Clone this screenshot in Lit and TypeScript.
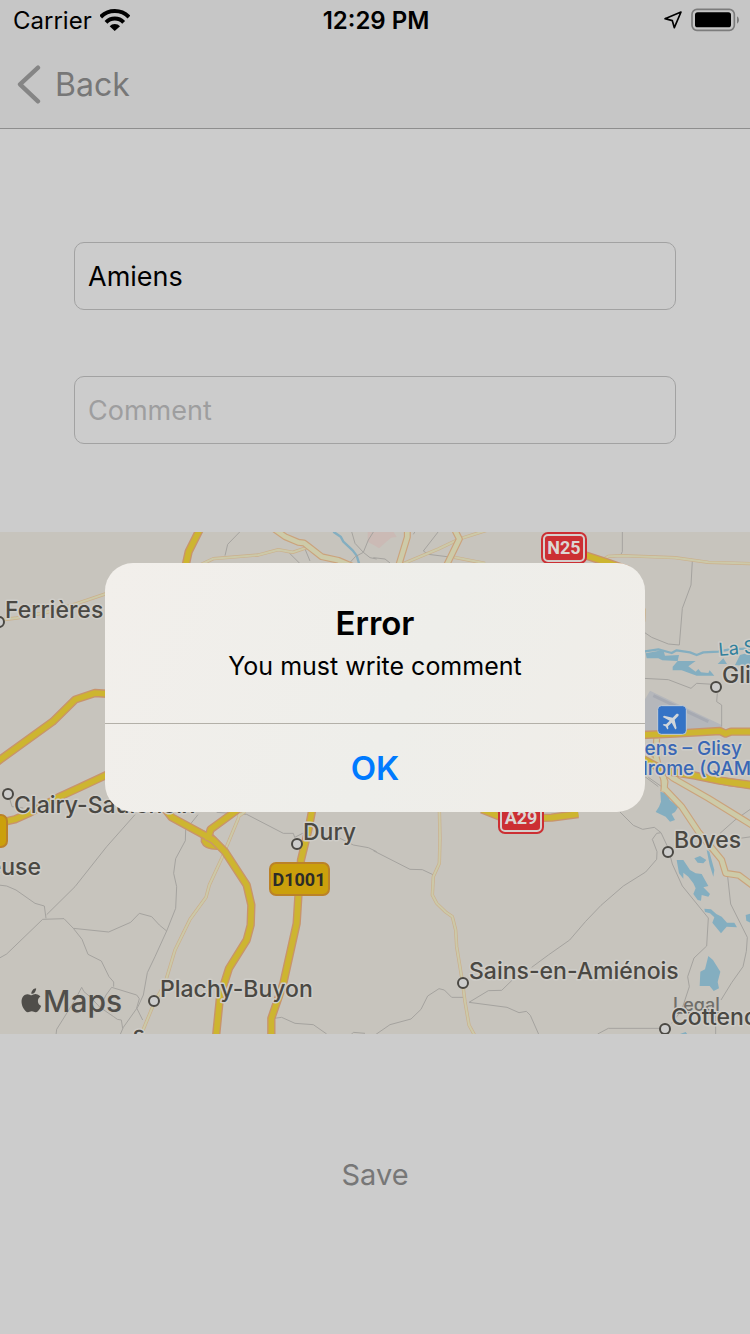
import { LitElement, html, svg, css } from "lit";
import { customElement, state } from "lit/decorators.js";

type Place = { name: string; x: number; y: number; cx: number; cy: number };

const places: Place[] = [
  { name: "Ferrières", x: 5, y: 86, cx: -1, cy: 90 },
  { name: "Clairy-Saulchoix", x: 14, y: 281, cx: 8, cy: 262 },
  { name: "Dury", x: 303, y: 308, cx: 297, cy: 312 },
  { name: "Plachy-Buyon", x: 160, y: 465, cx: 154, cy: 469 },
  { name: "Sains-en-Amiénois", x: 469, y: 447, cx: 463, cy: 451 },
  { name: "Boves", x: 674, y: 316, cx: 668, cy: 320 },
  { name: "Glisy", x: 722, y: 151, cx: 716, cy: 155 },
  { name: "Cottenchy", x: 671, y: 493, cx: 665, cy: 497 },
];

// The drawing is split into four sheets, each with its own origin.
const sheets = [
  {
    at: "translate(0 -21)",
    area: "",
    water: "",
    stream: "M1000 20L1022 35L1030 50L1058 76L1070 92L1078 118",
    track:
      "M720 20L683 58L675 92M868 84L900 116M915 72L930 108M1055 20L1065 55L1090 82L1105 45L1120 21M1090 82L1110 98L1130 102M1045 118L1066 95L1090 82",
    lane: "M600 120L640 101L775 90L835 74L878 82L920 68M0 285L50 279L140 262L230 236L330 202",
    road: "M820 10L855 35L895 52L912 54L925 64L965 95L1015 106L1060 125",
    trunk: "M602 8L566 80L555 130M-8 710L158 590L225 524L285 504L330 507",
  },
  {
    at: "translate(1125 -21)",
    area: "M-22 20L55 20L65 36L48 38L12 70L0 62L-22 50Z",
    water:
      "M812 385L865 375L870 392L912 390L908 408L862 406L850 400L815 400ZM893 425L908 408L962 408L940 424L962 440L970 432L978 442L1000 444L1004 436L1018 452L965 452L920 436L893 436ZM1028 417L1045 400L1056 417ZM1080 420L1095 390L1130 380L1130 425Z",
    stream: "M805 380L850 373L890 384L905 376L945 382L965 390L985 382L1030 380L1060 374L1130 370",
    track:
      "M190 20L145 78L160 88L240 98M-5 98L30 102L45 114M742 20L742 80L736 92M952 108L948 180L922 250L913 360L880 357L830 337L805 320M805 460L880 464L948 490L965 475L1015 478M1027 505L1025 530L1040 540L1040 605M120 20L115 28M810 755L850 785",
    lane: "M238 97L330 115M690 100L700 94L740 92L900 98L1000 112L1130 116M800 240L808 255L806 290",
    road: "M97 10L97 36L70 125M238 12L253 42L215 120M845 640L842 690L852 730L870 770L866 800M812 690L905 765",
    trunk: "M628 90L690 110L760 135M800 630L900 626L1035 618L1052 626L1068 620L1130 620M806 703L870 738L960 752L1030 766L1130 782",
  },
  {
    at: "translate(0 744)",
    area: "",
    water: "",
    stream: "",
    track:
      "M405 104L320 200L225 320L140 404M-5 315L20 318L48 330L105 370L133 378L138 415M-5 536L20 522L128 418L192 416L220 445L326 456L392 427L418 400L455 410L478 435L500 453M220 445L246 478L264 523L304 543L327 590L341 606L341 620M594 104L557 150L556 182L527 236L521 280L530 320L527 385L500 453L465 530L442 578L430 645L414 680L370 742L360 765M168 765L170 748L225 660L245 622L252 635L272 652L300 682L341 710L352 718L364 720L368 745M300 682L318 645L335 622L410 645L418 656L410 684L428 720M650 97L740 103L850 160L880 160L884 172L908 160M1020 175L1060 195L1105 203L1130 215M822 715L845 712L885 730L940 734L980 762M1055 762L1060 757L1095 760M10 28L30 60L36 80L70 84",
    lane: "M722 85L715 115L665 235L628 315L618 352L570 418L525 510L495 610L462 670L425 760M715 110L735 95",
    road: "",
    trunk:
      "M-8 130L45 118L90 98L175 52L240 22L330 -20M490 80L515 112L640 180L675 215L740 315L754 375L752 435L740 480L687 565L660 650L648 770M740 68L695 102L632 148L622 180M937 88L925 150L903 240L895 350L890 430L850 610L814 715L814 770",
  },
  {
    at: "translate(1125 744)",
    area: "",
    water:
      "M856 35L880 42L884 60L910 80L900 96L890 102L900 120L885 125L872 110L842 96L852 80L858 65ZM905 240L925 240L945 270L962 280L980 282L1000 318L985 322L1005 342L1000 350L980 345L978 362L968 360L955 342L962 325L955 310L940 290L925 278L925 296L912 280ZM958 235L975 228L994 240L985 250L968 248ZM995 210L1003 215L1018 270L1015 290L1004 255ZM988 386L1008 388L1024 402L1040 410L1056 428L1078 428L1086 442L1055 440L1038 460L1028 448L1012 428L1018 412L1005 400L990 396ZM1112 405L1130 400L1130 430L1114 422ZM1000 528L1014 540L1036 575L1028 606L1032 625L1016 633L1004 618L974 618L976 575L990 568ZM915 762L932 756L938 764Z",
    stream: "",
    track:
      "M735 96L775 136L803 148L838 142L858 158L880 205M-5 212L105 268L142 269L176 285M858 158L845 160L832 178L846 215L845 238L812 276L745 318L678 376L632 424L584 480L520 525L470 562M412 600L380 631L340 632L282 667L396 682L432 698L454 694L466 706L492 765M0 765L45 734L108 717L138 688L158 648L192 626L208 630L230 652L266 652M885 225L892 252L922 318L1000 414L995 498L957 534L938 590L943 620L920 690L890 730M668 762L700 745L852 745M1058 290L1067 372L1117 472L1114 514L1104 560L1070 608L1038 660M1022 700L1022 765M1035 160L1080 120L1130 85M1095 175L1130 170M820 -8L860 20",
    lane: "M193 85L195 175L193 250L175 290L172 345L185 370L212 396L232 410L242 450L245 500L263 610L270 665L282 735L300 768",
    road: "M866 -10L868 25L920 80L970 155L1040 240L1052 280L1092 286L1135 318M820 -65L895 -5L1000 55L1135 138",
    trunk: "M320 88L380 112L480 114L530 113L610 102M1000 -6L1060 6L1135 15",
  },
];

@customElement("app-map")
export class AppMap extends LitElement {
  static styles = css`
    :host {
      display: block;
      background: #c7c4bd;
      overflow: hidden;
    }
    .canvas {
      display: block;
      width: 100%;
      height: auto;
      font-family: Inter, "Liberation Sans", sans-serif;
    }
    .cased path {
      fill: none;
      stroke-linejoin: round;
    }
    .area { fill: #cbbab5; }
    .airport { fill: #b5b7bb; }
    .runway { stroke: #a7aab2; stroke-width: 9; }
    .water { fill: #84aec0; }
    .cased .stream { stroke: #84aec0; stroke-width: 7; }
    .cased .track { stroke: #a5a39f; stroke-width: 3; }
    .cased .lane-edge { stroke: #cbb08c; stroke-width: 10; }
    .cased .lane { stroke: #ccc9a9; stroke-width: 6; }
    .cased .road-edge { stroke: #cba37c; stroke-width: 21; }
    .cased .road { stroke: #cdcba9; stroke-width: 14; }
    .cased .trunk-edge { stroke: #c8946c; stroke-width: 25; }
    .cased .trunk { stroke: #cdb530; stroke-width: 17; }
    .cased .ramp { fill: #cdb530; stroke: #c8946c; stroke-width: 4; }
    .halo {
      paint-order: stroke;
      stroke: #cfcdc8;
      stroke-width: 3px;
      stroke-linejoin: round;
    }
    .place { font-size: 23px; font-weight: 500; fill: #4a4843; }
    .dot { fill: #cdcdcc; stroke: #4a4843; stroke-width: 2; }
    .river { font-size: 18px; fill: #30809c; }
    .field { font-size: 19px; font-weight: 500; fill: #3967b5; text-anchor: end; }
    .pin { fill: #3573c6; stroke: #c4ccd4; stroke-width: 3; }
    .plane { fill: #d2d6da; }
    .legal { font-size: 18px; font-weight: 500; fill: #706e6a; text-decoration: underline; }
    .brand { font-size: 30px; font-weight: 500; fill: #504e4a; }
    .logo { fill: #504e4a; }
    .plate {
      font-family: Roboto, "Liberation Sans", sans-serif;
      font-size: 18px;
      font-weight: 700;
      text-anchor: middle;
    }
    .red { fill: #cc2f33; }
    .rim { fill: none; stroke: #d6cfcc; stroke-width: 2; }
    .gold { fill: #cba00c; stroke: #bb8228; stroke-width: 2; }
    .light { fill: #dcd6d3; }
    .dark { fill: #2d2c28; }
  `;

  private layer(kind: string, key: "stream" | "track" | "lane" | "road" | "trunk") {
    return svg`${sheets.map(
      (s) => svg`<path class=${kind} transform=${s.at} d=${s[key]}></path>`
    )}`;
  }

  private redShield(x: number, y: number, label: string) {
    return svg`<g transform="translate(${x} ${y})">
      <rect class="red" width="46" height="32" rx="7"></rect>
      <rect class="rim" x="3" y="3" width="40" height="26" rx="4"></rect>
      <text class="plate light" x="23" y="22">${label}</text>
    </g>`;
  }

  render() {
    return html`
      <svg class="canvas" viewBox="0 0 750 502" role="img" aria-label="Map around Amiens">
        <svg width="750" height="502" viewBox="0 0 2250 1506">
          ${sheets.map(
            (s) => svg`<g transform=${s.at}>
              <path class="area" d=${s.area}></path>
              <path class="water" d=${s.water}></path>
            </g>`
          )}
          <g transform="translate(1125 -21)">
            <path class="airport" d="M800 530L812 520L825 497L1040 600L1040 612L800 624Z"></path>
            <path class="runway" d="M835 512L1000 590"></path>
          </g>
          <g class="cased">
            ${this.layer("stream", "stream")}
            ${this.layer("track", "track")}
            ${this.layer("lane-edge", "lane")}
            ${this.layer("lane", "lane")}
            <g transform="translate(1125 -21)">
              <path class="lane-edge" d="M80 118L190 72L253 42L335 16"></path>
              <path class="lane" d="M80 118L190 72L253 42L335 16"></path>
            </g>
            ${this.layer("road-edge", "road")}
            ${this.layer("road", "road")}
            <g transform="translate(0 744)">
              <path class="ramp" d="M604 150L604 185Q612 208 652 208L670 205L640 165Z"></path>
            </g>
            ${this.layer("trunk-edge", "trunk")}
            ${this.layer("trunk", "trunk")}
          </g>
          <g transform="translate(1125 -21)">
            <rect class="pin" x="848" y="542" width="86" height="86" rx="11"></rect>
            <path class="plane" transform="translate(890 587) rotate(45) scale(2.8) translate(-11.5 -12)"
              d="M21 16v-2l-8-5V3.5c0-.83-.67-1.5-1.5-1.5S10 2.67 10 3.5V9l-8 5v2l8-2.5V19l-2 1.5V22l3.5-1 3.5 1v-1.5L13 19v-5.5l8 2.5z"></path>
          </g>
          <path class="logo" transform="translate(58 1369) scale(3)"
            d="M12.152 6.896c-.948 0-2.415-1.078-3.96-1.04-2.04.027-3.91 1.183-4.961 3.014-2.117 3.675-.546 9.103 1.519 12.09 1.013 1.454 2.208 3.09 3.792 3.039 1.52-.065 2.09-.987 3.935-.987 1.831 0 2.35.987 3.96.948 1.637-.026 2.676-1.48 3.676-2.948 1.156-1.688 1.636-3.325 1.662-3.415-.039-.013-3.182-1.221-3.22-4.857-.026-3.04 2.48-4.494 2.597-4.559-1.429-2.09-3.623-2.324-4.39-2.376-2-.156-3.675 1.09-4.61 1.09zM15.53 3.83c.843-1.012 1.4-2.427 1.245-3.83-1.207.052-2.662.805-3.532 1.818-.78.896-1.454 2.338-1.273 3.714 1.338.104 2.715-.688 3.559-1.701"></path>
        </svg>
        <text class="brand" x="43" y="480">Maps</text>
        <a href="#legal"><text class="legal" x="673" y="479">Legal</text></a>
        <text class="river halo" transform="rotate(-5 719 124)" x="719" y="124">La Somme</text>
        <text class="field halo" x="742" y="223">Amiens – Glisy</text>
        <text class="field halo" x="758" y="243">Aérodrome (QAM)</text>
        <text class="place halo" x="41" y="343" text-anchor="end">Creuse</text>
        <text class="place halo" transform="rotate(-8 135 511)" x="134" y="511">s</text>
        ${places.map(
          (p) => svg`<circle class="dot" cx=${p.cx} cy=${p.cy} r="5"></circle>
            <text class="place halo" x=${p.x} y=${p.y}>${p.name}</text>`
        )}
        ${this.redShield(541, 0, "N25")} ${this.redShield(498, 270, "A29")}
        <rect class="gold" x="270" y="331" width="59" height="32" rx="6"></rect>
        <text class="plate dark" x="299" y="354">D1001</text>
        <rect class="gold" x="-30" y="283" width="37" height="32" rx="6"></rect>
      </svg>
    `;
  }
}

@customElement("app-root")
export class AppRoot extends LitElement {
  @state() private alertOpen = true;

  static styles = css`
    :host {
      position: relative;
      display: flex;
      flex-direction: column;
      min-height: 100vh;
      background: #cccccc;
      color: #000;
      font-family: Inter, "Liberation Sans", sans-serif;
    }
    * { box-sizing: border-box; }
    button {
      border: 0;
      padding: 0;
      margin: 0;
      background: none;
      font: inherit;
      cursor: pointer;
    }
    .top {
      background: #c6c6c6;
      border-bottom: 1px solid #8e8e8e;
    }
    .status {
      display: grid;
      grid-template-columns: 1fr auto 1fr;
      align-items: center;
      height: 42px;
      padding: 0 11px 0 13px;
      font-size: 24px;
      line-height: 42px;
    }
    .group { display: flex; align-items: center; gap: 8px; }
    .end { justify-content: flex-end; }
    .icon { display: block; margin-bottom: 2px; }
    .time { font-weight: 600; }
    .nav { display: flex; align-items: center; height: 86px; padding: 0 16px; }
    .back {
      display: flex;
      align-items: center;
      gap: 13px;
      color: #777777;
      font-size: 32px;
      line-height: 40px;
    }
    .form {
      display: flex;
      flex-direction: column;
      gap: 66px;
      padding: 113px 74px 88px;
    }
    .field {
      width: 100%;
      height: 68px;
      padding: 0 13px;
      border: 1px solid #a2a2a2;
      border-radius: 10px;
      background: transparent;
      color: #000;
      font: inherit;
      font-size: 27px;
      outline: none;
    }
    .field::placeholder { color: #9e9e9f; opacity: 1; }
    .actions { display: flex; justify-content: center; padding: 120px 0; }
    .save { color: #777777; font-size: 29px; line-height: 42px; }
    .overlay {
      position: absolute;
      inset: 0;
      display: flex;
      align-items: center;
      justify-content: center;
      padding: 40px 24px 0;
    }
    .alert {
      width: 540px;
      border-radius: 28px;
      overflow: hidden;
      background: linear-gradient(115deg, #f2efeb, #eeeeea 55%, #f0ede8);
      text-align: center;
    }
    .body { padding: 39px 32px 35px; }
    .title { margin: 0; font-size: 33px; line-height: 42px; font-weight: 600; }
    .message { margin: 0; font-size: 25px; line-height: 44px; }
    .ok {
      display: block;
      width: 100%;
      height: 89px;
      border-top: 1px solid #b3b0a8;
      color: #007aff;
      font-size: 33px;
      font-weight: 600;
    }
  `;

  render() {
    return html`
      <header class="top">
        <div class="status">
          <div class="group">
            <span>Carrier</span>
            <svg class="icon" width="30" height="24" viewBox="299 24 90 72" aria-hidden="true">
              <path d="M301 51A60 60 0 0 1 386 51M317 67A37 37 0 0 1 370 67" fill="none" stroke="#000" stroke-width="12"></path>
              <path d="M343 93L328 79A20 20 0 0 1 359 79Z"></path>
            </svg>
          </div>
          <span class="time">12:29 PM</span>
          <div class="group end">
            <svg class="icon" width="20" height="20" viewBox="864 33 60 60" aria-hidden="true">
              <path d="M870 59L918 39L898 86L892 65Z" fill="none" stroke="#000" stroke-width="5" stroke-linejoin="round"></path>
            </svg>
            <svg class="icon" width="48" height="24" viewBox="948 23 144 72" aria-hidden="true">
              <rect x="951" y="27" width="127" height="63" rx="15" fill="none" stroke="#7c7c7c" stroke-width="5"></rect>
              <rect x="960" y="36" width="108" height="45" rx="8"></rect>
              <path d="M1086 48Q1092 51 1092 59Q1092 67 1086 70Z" fill="#7c7c7c"></path>
            </svg>
          </div>
        </div>
        <nav class="nav">
          <button class="back" type="button">
            <svg width="26" height="40" viewBox="48 194 78 120" aria-hidden="true">
              <path d="M114 202L60 252L114 303" fill="none" stroke="#858585" stroke-width="13" stroke-linecap="round" stroke-linejoin="round"></path>
            </svg>
            <span>Back</span>
          </button>
        </nav>
      </header>
      <form class="form" @submit=${(e: Event) => e.preventDefault()}>
        <input class="field" type="text" aria-label="City" .value=${"Amiens"} />
        <input class="field" type="text" aria-label="Comment" placeholder="Comment" />
      </form>
      <app-map></app-map>
      <div class="actions">
        <button class="save" type="button" @click=${() => (this.alertOpen = true)}>Save</button>
      </div>
      ${this.alertOpen
        ? html`<div class="overlay">
            <section class="alert" role="alertdialog" aria-labelledby="title" aria-describedby="message">
              <div class="body">
                <h1 class="title" id="title">Error</h1>
                <p class="message" id="message">You must write comment</p>
              </div>
              <button class="ok" type="button" @click=${() => (this.alertOpen = false)}>OK</button>
            </section>
          </div>`
        : null}
    `;
  }
}
